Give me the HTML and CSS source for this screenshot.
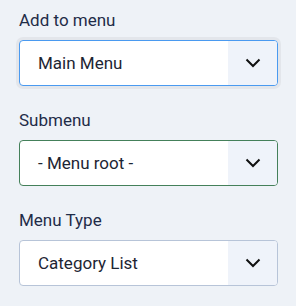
FILE: index.html
```html
<!DOCTYPE html>
<html lang="en">
<head>
    <meta charset="UTF-8">
    <meta name="viewport" content="width=device-width, initial-scale=1.0">
    <title>Menu Item</title>
    <link rel="stylesheet" href="styles.css">
</head>
<body>
    <div class="panel">
        <div class="field">
            <label>Add to menu</label>
            <div class="select focus">
                <span class="value">Main Menu</span>
                <span class="caret">
                    <svg width="16" height="10" viewBox="0 0 16 10"><path d="M1.5 1.5 L8 8 L14.5 1.5" fill="none" stroke="#111" stroke-width="2"/></svg>
                </span>
            </div>
        </div>

        <div class="field">
            <label>Submenu</label>
            <div class="select valid">
                <span class="value">- Menu root -</span>
                <span class="caret">
                    <svg width="16" height="10" viewBox="0 0 16 10"><path d="M1.5 1.5 L8 8 L14.5 1.5" fill="none" stroke="#111" stroke-width="2"/></svg>
                </span>
            </div>
        </div>

        <div class="field">
            <label>Menu Type</label>
            <div class="select">
                <span class="value">Category List</span>
                <span class="caret">
                    <svg width="16" height="10" viewBox="0 0 16 10"><path d="M1.5 1.5 L8 8 L14.5 1.5" fill="none" stroke="#111" stroke-width="2"/></svg>
                </span>
            </div>
        </div>
    </div>
</body>
</html>
```

FILE: styles.css
```css
body {
    font-family: Roboto, "Liberation Sans", sans-serif;
    background-color: #eef2f7;
    margin: 0;
    padding: 0;
}

.panel {
    padding: 8px 18px 0 19px;
}

.field {
    margin-bottom: 22px;
}

.field label {
    display: block;
    font-size: 17px;
    line-height: 24px;
    color: #1f2c48;
    margin-bottom: 8px;
}

.select {
    display: flex;
    height: 46px;
    box-sizing: border-box;
    background-color: #fff;
    border: 1px solid #b7c4d8;
    border-radius: 4px;
    overflow: hidden;
}

.select.focus {
    border-color: #4a9af0;
    box-shadow: 0 0 0 3px #e3e6eb;
}

.select.valid {
    border-color: #44805a;
}

.select .value {
    flex: 1;
    display: flex;
    align-items: center;
    padding-left: 18px;
    font-size: 17px;
    color: #1d2533;
}

.select .caret {
    width: 49px;
    display: flex;
    align-items: center;
    justify-content: center;
    background-color: #eff3fa;
}
```
